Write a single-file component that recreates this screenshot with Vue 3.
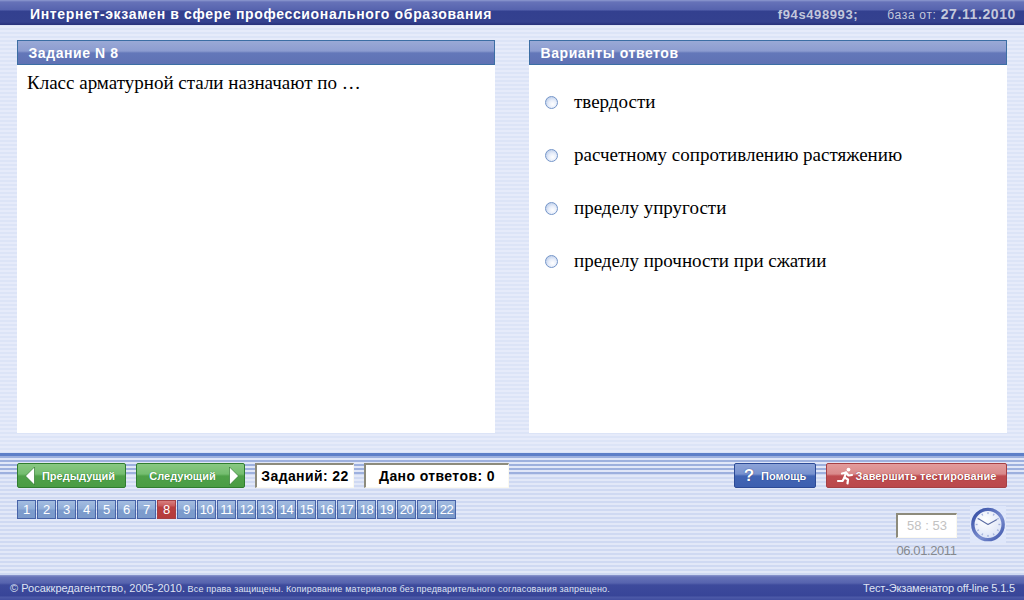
<script setup>
const answers = ['твердости', 'расчетному сопротивлению растяжению', 'пределу упругости', 'пределу прочности при сжатии']
const pages = Array.from({ length: 22 }, (_, i) => i + 1)
const ticks = Array.from({ length: 12 }, (_, i) => i * 30)
</script>

<template>
  <div class="app">
    <header class="topbar">
      <div class="title">Интернет-экзамен в сфере профессионального образования</div>
      <div class="meta"><b>f94s498993;</b><span class="base">база от: <b>27.11.2010</b></span></div>
    </header>

    <main class="content">
      <section class="panel">
        <h2 class="panel-head">Задание N 8</h2>
        <p class="question">Класс арматурной стали назначают по …</p>
      </section>
      <section class="panel">
        <h2 class="panel-head">Варианты ответов</h2>
        <ul class="answers">
          <li v-for="a in answers" :key="a" class="answer"><span class="radio"></span>{{ a }}</li>
        </ul>
      </section>
    </main>

    <section class="bottom">
      <div class="nav-row">
        <button class="btn green prev">
          <svg width="12" height="20" viewBox="0 0 12 20"><path d="M10.5 1 L1.5 10 L10.5 19 Z" fill="#fff" stroke="#1f6d1f" stroke-width=".6"/></svg>
          Предыдущий
        </button>
        <button class="btn green next">
          Следующий
          <svg width="12" height="20" viewBox="0 0 12 20"><path d="M1.5 1 L10.5 10 L1.5 19 Z" fill="#fff" stroke="#1f6d1f" stroke-width=".6"/></svg>
        </button>
        <div class="counter c1">Заданий: 22</div>
        <div class="counter c2">Дано ответов: 0</div>
        <div class="spacer"></div>
        <button class="btn blue">
          <span class="q">?</span>Помощь
        </button>
        <button class="btn red">
          <svg width="18" height="18" viewBox="0 0 18 18" fill="none" stroke="#fff" stroke-width="2.2" stroke-linecap="round" stroke-linejoin="round">
            <circle cx="12.5" cy="2.6" r="1.9" fill="#fff" stroke="none"/>
            <path d="M6 6.5 L10 5.5 L8.5 10.5 L12 12.5 L11.5 16.5"/>
            <path d="M10 5.5 L12.5 8.5 L16 8"/>
            <path d="M8.5 10.5 L6.5 14 L2 14"/>
          </svg>
          Завершить тестирование
        </button>
      </div>

      <div class="lower">
        <div class="pages">
          <span v-for="p in pages" :key="p" class="page" :class="{ active: p === 8 }">{{ p }}</span>
        </div>
        <div class="time">
          <div class="time-col">
            <div class="timer">58 : 53</div>
            <div class="date">06.01.2011</div>
          </div>
          <svg class="clock" width="36" height="37" viewBox="0 0 38 39">
            <defs>
              <radialGradient id="face" cx=".4" cy=".35" r=".75">
                <stop offset="0" stop-color="#ffffff"/>
                <stop offset="1" stop-color="#d5def5"/>
              </radialGradient>
              <linearGradient id="ring" x1="0" y1="0" x2="1" y2="1">
                <stop offset="0" stop-color="#2f48a0"/>
                <stop offset=".6" stop-color="#7c8fd0"/>
                <stop offset="1" stop-color="#3a52a8"/>
              </linearGradient>
            </defs>
            <rect width="38" height="39" fill="#dfe7fa"/>
            <circle cx="19" cy="19.5" r="16" fill="url(#face)" stroke="url(#ring)" stroke-width="3.6"/>
            <g fill="#a3b1dc">
              <rect v-for="t in ticks" :key="t" x="18.3" y="6.5" width="1.4" height="2" :transform="`rotate(${t} 19 19.5)`"/>
            </g>
            <path d="M19 19.5 L9 13.5 M19 19.5 L28 14.5" stroke="#5a6ba3" stroke-width="1.1" stroke-linecap="round"/>
          </svg>
        </div>
      </div>
    </section>

    <footer class="footer">
      <div class="copy"><span class="big">© Росаккредагентство, 2005-2010.</span> Все права защищены. Копирование материалов без предварительного согласования запрещено.</div>
      <div class="ver">Тест-Экзаменатор off-line 5.1.5</div>
    </footer>
  </div>
</template>

<style>
html, body { margin: 0; background: #dfe6f8; }
</style>

<style scoped>
.app {
  width: 1024px;
  height: 600px;
  display: flex;
  flex-direction: column;
  overflow: hidden;
  font-family: "Liberation Sans", Arial, sans-serif;
  background: repeating-linear-gradient(180deg, #dce4f7 0 2px, #e6ebfa 2px 4px);
}
.topbar {
  height: 25px;
  box-sizing: border-box;
  flex: none;
  display: flex;
  justify-content: space-between;
  align-items: center;
  padding: 3px 8px 0 30px;
  color: #fff;
  background: linear-gradient(180deg, #8e9ad0 0, #6672b8 2px, #5663ae 10px, #33408f 11px, #34418f 22px, #2a3580 24px, #28327a 25px);
}
.title { font-size: 14px; font-weight: bold; letter-spacing: .66px; white-space: nowrap; }
.meta { display: flex; font-size: 13px; color: #c3c8dc; letter-spacing: .6px; gap: 29px; align-items: baseline; }
.meta b { font-weight: bold; }
.base { letter-spacing: .7px; font-size: 12px; font-weight: normal; }
.base b { font-size: 14px; letter-spacing: .6px; }

.content {
  flex: none;
  height: 428px;
  box-sizing: border-box;
  padding: 15px 17px 20px;
  display: flex;
  gap: 34px;
}
.panel {
  flex: 1;
  background: #fff;
  display: flex;
  flex-direction: column;
}
.panel-head {
  margin: 0;
  height: 25px;
  box-sizing: border-box;
  border: 1px solid #3c6ea4;
  padding: 0 0 0 10.5px;
  font-size: 14px;
  line-height: 25px;
  font-weight: bold;
  letter-spacing: .58px;
  color: #fff;
  background: linear-gradient(180deg, #9aa9d6 0, #8c9cd0 10px, #6377b9 12px, #5f72b4 23px);
}
.question {
  margin: 0;
  padding: 7px 10px;
  font: 19px/22px "Liberation Serif", "Times New Roman", serif;
  color: #000;
}
.answers {
  list-style: none;
  margin: 0;
  padding: 10px 0 0 16px;
}
.answer {
  height: 53px;
  display: flex;
  align-items: center;
  font: 19px "Liberation Serif", "Times New Roman", serif;
  color: #000;
}
.radio {
  width: 13px;
  height: 13px;
  box-sizing: border-box;
  margin: 2px 16px 0 0;
  border-radius: 50%;
  border: 1.5px solid #7596c9;
  background: radial-gradient(circle at 60% 65%, #fff 0, #e8eefa 40%, #a9bfe2 100%);
}

.bottom {
  flex: none;
  height: 122px;
  box-sizing: border-box;
  padding: 10px 17px 0;
  display: flex;
  flex-direction: column;
  background:
    linear-gradient(180deg, #5f80c8 0 3px, transparent 3px) top / 100% 3px no-repeat,
    repeating-linear-gradient(180deg, #9db0de 0 2px, #e1e7f8 2px 4px) 0 3px / 100% 18px no-repeat,
    repeating-linear-gradient(180deg, #cfd9f2 0 2px, #e2e8f8 2px 4px);
}
.nav-row {
  display: flex;
  align-items: stretch;
  height: 25px;
}
.btn {
  height: 25px;
  box-sizing: border-box;
  padding: 0;
  display: flex;
  align-items: center;
  justify-content: center;
  font-family: "Liberation Sans", Arial, sans-serif;
  font-size: 11px;
  font-weight: bold;
  color: #fff;
  border-radius: 2px;
  cursor: pointer;
}
.green {
  border: 1px solid #2f7d2f;
  background: linear-gradient(180deg, #89c883 0, #74bd6f 10px, #4fa149 12px, #4a9c44 23px);
  text-shadow: 0 0 1px #1f6d1f;
}
.prev { width: 109px; gap: 6px; padding-right: 4px; }
.next { width: 109px; margin-left: 10px; gap: 12px; padding-left: 8px; }
.counter {
  box-sizing: border-box;
  height: 25px;
  background: #fff;
  border: 1px solid #fbf9ef;
  border-top: 2px solid #8d8b7c;
  border-left: 2px solid #8d8b7c;
  font-size: 14px;
  font-weight: bold;
  letter-spacing: .4px;
  display: flex;
  align-items: center;
  justify-content: center;
  color: #000;
  white-space: nowrap;
}
.c1 { width: 99px; margin-left: 10px; }
.c2 { width: 145px; margin-left: 10px; }
.spacer { flex: 1; }
.blue {
  width: 82px;
  gap: 7px;
  border: 1px solid #2c4a96;
  background: linear-gradient(180deg, #8ca3d8 0, #7892cf 10px, #4265b4 12px, #3d5fb0 23px);
  text-shadow: 0 0 1px #10246a;
}
.q { font-size: 17px; line-height: 1; }
.red {
  width: 181px;
  margin-left: 10px;
  gap: 1px;
  letter-spacing: .1px;
  border: 1px solid #a54044;
  background: linear-gradient(180deg, #e39c9c 0, #d98a8a 10px, #bf4d50 12px, #ba484b 23px);
  text-shadow: 0 0 1px #7d1f22;
}

.lower {
  flex: 1;
  display: flex;
  justify-content: space-between;
  padding-top: 12px;
}
.pages { display: flex; gap: 1px; height: 19px; }
.page {
  width: 19px;
  height: 19px;
  box-sizing: border-box;
  border: 1px solid #4763a8;
  color: #fff;
  font-size: 13px;
  letter-spacing: -.4px;
  line-height: 17px;
  text-align: center;
  background: linear-gradient(180deg, #a3bce0 0, #90add8 8px, #7d9ccd 9px, #7b9acb 17px);
}
.active {
  border-color: #a54044;
  background: linear-gradient(180deg, #d87e7e 0, #c85a5a 5px, #b93f3f 6px, #b53b3b 17px);
}
.time { display: flex; gap: 13px; margin-top: 13px; }
.time-col { display: flex; flex-direction: column; align-items: center; }
.timer {
  width: 61px;
  height: 25px;
  box-sizing: border-box;
  background: #fff;
  border: 1px solid #fbf9ef;
  border-top: 2px solid #8d8b7c;
  border-left: 2px solid #8d8b7c;
  color: #c2c2c2;
  font-size: 13px;
  text-align: center;
  line-height: 21px;
}
.date { color: #85898f; font-size: 13px; margin-top: 5px; letter-spacing: -.4px; }
.clock { margin: -7px 1px 0 0; }

.footer {
  height: 25px;
  flex: none;
  box-sizing: border-box;
  display: flex;
  justify-content: space-between;
  align-items: center;
  padding: 0 9px 0 10px;
  color: #dfe3f3;
  font-size: 9px;
  background: linear-gradient(180deg, #8e9ad0 0, #6672b8 2px, #5663ae 8px, #3d4a9c 10px, #384598 21px, #4d5aa8 22px, #414e9f 25px);
}
.copy { white-space: nowrap; letter-spacing: .15px; }
.big { font-size: 11px; letter-spacing: 0; }
.ver { font-size: 11px; white-space: nowrap; letter-spacing: -.15px; }
</style>
